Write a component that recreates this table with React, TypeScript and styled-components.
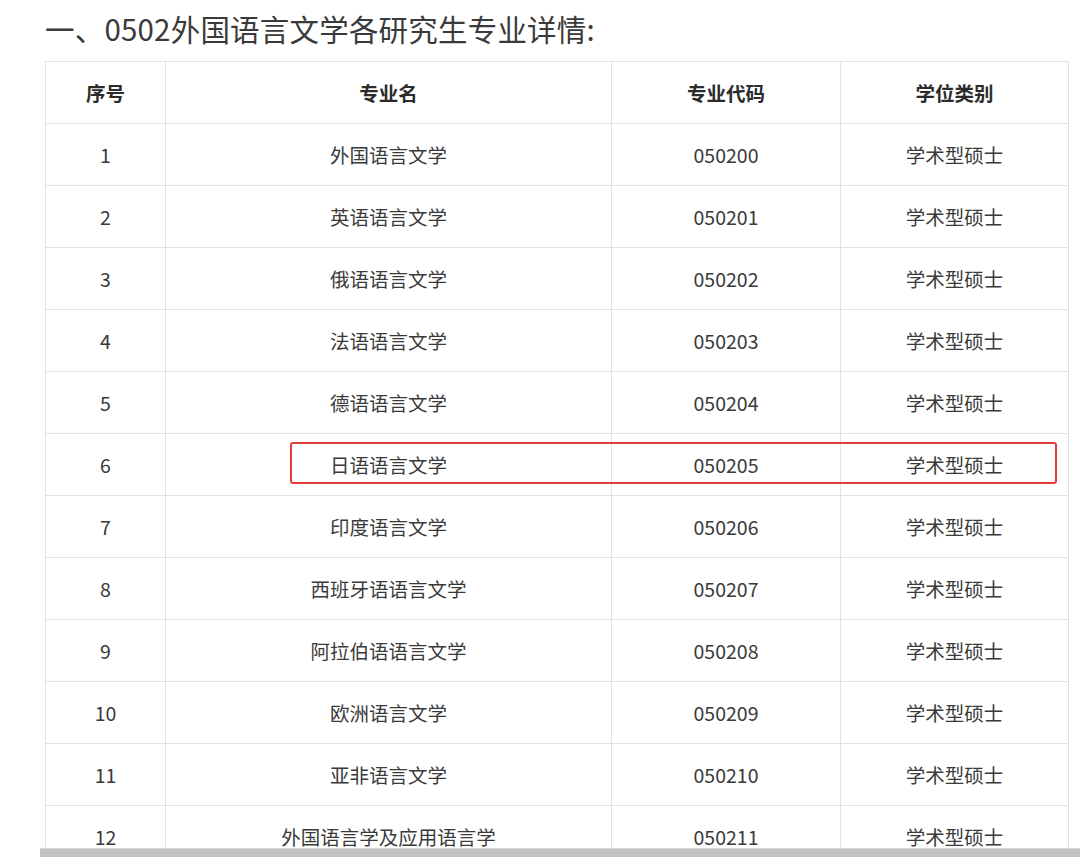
import styled, { createGlobalStyle } from 'styled-components'

const GlobalStyle = createGlobalStyle`
    html, body {
        margin: 0;
        padding: 0;
        background: #ffffff;
        overflow: hidden;
    }
    body {
        font-family: "Noto Sans CJK SC", "Noto Sans", sans-serif;
        color: #333333;
    }
`

const COLUMNS = '120px 446px 229px 228px'

const Page = styled.div`
    display: flex;
    flex-direction: column;
    width: 1080px;
    height: 857px;
`

const Viewport = styled.div`
    height: 848px;
    overflow: hidden;
    padding-left: 45px;
`

const Title = styled.h1`
    margin: 8px 0 13px 0;
    font-size: 29.5px;
    line-height: 40px;
    font-weight: 400;
    color: #3a3a3a;
    letter-spacing: 0.2px;
`

const Table = styled.div`
    display: flex;
    flex-direction: column;
    width: 1024px;
    border-top: 1px solid #e1e1e1;
    border-left: 1px solid #e1e1e1;
    box-sizing: border-box;
`

const Row = styled.div`
    position: relative;
    display: grid;
    grid-template-columns: ${COLUMNS};
    height: 62px;
`

const Cell = styled.div<{ $head?: boolean }>`
    display: flex;
    align-items: center;
    justify-content: center;
    border-right: 1px solid #e1e1e1;
    border-bottom: 1px solid #e1e1e1;
    font-size: 19.5px;
    font-weight: ${(p) => (p.$head ? 700 : 400)};
    color: ${(p) => (p.$head ? '#2b2b2b' : '#3a3a3a')};
`

const Highlight = styled.div`
    position: absolute;
    left: 244px;
    top: 8px;
    width: 767px;
    height: 42px;
    border: 2px solid #e23b3b;
    border-radius: 3px;
    box-sizing: border-box;
    pointer-events: none;
`

const ScrollBar = styled.div`
    height: 9px;
    margin-left: 40px;
    background: #c1c1c1;
    border-top: 1px solid #d6d6d6;
    box-sizing: border-box;
`

const rows = [
    ['外国语言文学', '050200'],
    ['英语语言文学', '050201'],
    ['俄语语言文学', '050202'],
    ['法语语言文学', '050203'],
    ['德语语言文学', '050204'],
    ['日语语言文学', '050205'],
    ['印度语言文学', '050206'],
    ['西班牙语语言文学', '050207'],
    ['阿拉伯语语言文学', '050208'],
    ['欧洲语言文学', '050209'],
    ['亚非语言文学', '050210'],
    ['外国语言学及应用语言学', '050211'],
]

export default function App() {
    return (
        <Page>
            <GlobalStyle />
            <Viewport>
                <Title>一、0502外国语言文学各研究生专业详情:</Title>
                <Table>
                    <Row>
                        <Cell $head>序号</Cell>
                        <Cell $head>专业名</Cell>
                        <Cell $head>专业代码</Cell>
                        <Cell $head>学位类别</Cell>
                    </Row>
                    {rows.map(([name, code], i) => (
                        <Row key={code}>
                            <Cell>{i + 1}</Cell>
                            <Cell>{name}</Cell>
                            <Cell>{code}</Cell>
                            <Cell>学术型硕士</Cell>
                            {code === '050205' && <Highlight />}
                        </Row>
                    ))}
                </Table>
            </Viewport>
            <ScrollBar />
        </Page>
    )
}
